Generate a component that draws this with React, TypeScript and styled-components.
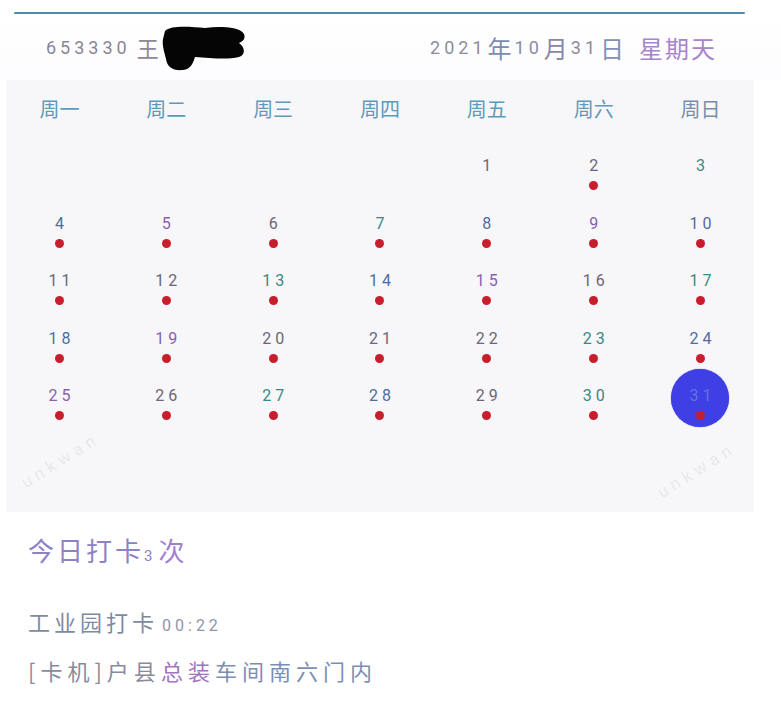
import React from "react";
import styled, { createGlobalStyle } from "styled-components";

const GlobalStyle = createGlobalStyle`
  html, body {
    margin: 0;
    padding: 0;
    background: #fff;
  }
  body {
    font-family: "Noto Sans", "Noto Sans CJK SC", sans-serif;
  }
`;

const CJK = `"Noto Sans CJK SC", "Noto Sans", sans-serif`;
const DIGITS = `Roboto, "Noto Sans", sans-serif`;

const Page = styled.div`
  width: 781px;
  height: 703px;
  overflow: hidden;
  background: #fff;
`;

const TopRule = styled.div`
  margin: 12px 0 0 14px;
  width: 731px;
  height: 2px;
  border-radius: 1px;
  background: #4f88aa;
`;

const Header = styled.div`
  display: flex;
  align-items: center;
  justify-content: space-between;
  height: 66px;
  padding: 0 64px 0 46px;
  background: linear-gradient(#fff, #fdfcfe);
`;

const Who = styled.div`
  display: flex;
  align-items: center;
`;

const Digits = styled.span<{ $size?: number; $color?: string }>`
  font-family: ${DIGITS};
  font-size: ${(p) => p.$size ?? 18}px;
  letter-spacing: 4px;
  color: ${(p) => p.$color ?? "#8a8597"};
`;

const Han = styled.span<{ $size?: number; $color?: string }>`
  font-family: ${CJK};
  font-size: ${(p) => p.$size ?? 22}px;
  color: ${(p) => p.$color ?? "#8c8898"};
`;

const DateHan = styled(Han)`
  margin: 0 3px 0 1px;
`;

const Blot = styled.svg`
  margin-left: 2px;
  margin-top: 2px;
`;

const DateLine = styled.div`
  display: flex;
  align-items: center;
`;

const Panel = styled.div`
  position: relative;
  margin-left: 6px;
  width: 748px;
  padding-bottom: 88px;
  background: #f7f6f8;
`;

const WeekRow = styled.div`
  display: grid;
  grid-template-columns: repeat(7, 1fr);
  height: 56px;
  align-items: center;
`;

const WeekLabel = styled.div<{ $color?: string }>`
  text-align: center;
  font-family: ${CJK};
  font-size: 20px;
  color: ${(p) => p.$color ?? "#5c9cb8"};
`;

const DayGrid = styled.div`
  display: grid;
  grid-template-columns: repeat(7, 1fr);
  grid-auto-rows: 57.5px;
`;

const Cell = styled.div`
  position: relative;
  display: flex;
  flex-direction: column;
  align-items: center;
  padding-top: 22px;
`;

const Num = styled.span<{ $color: string }>`
  position: relative;
  font-family: ${DIGITS};
  font-size: 16px;
  line-height: 16px;
  letter-spacing: 4px;
  margin-right: -4px;
  color: ${(p) => p.$color};
`;

const Dot = styled.span<{ $hidden?: boolean }>`
  position: relative;
  margin-top: 7px;
  width: 9px;
  height: 9px;
  border-radius: 50%;
  background: #c81d2c;
  visibility: ${(p) => (p.$hidden ? "hidden" : "visible")};
`;

const TodayRing = styled.span`
  position: absolute;
  top: 3px;
  left: 50%;
  width: 58px;
  height: 58px;
  margin-left: -30px;
  border-radius: 50%;
  background: #3e3fe4;
  box-shadow: 0 0 1px #3a3ad0;
`;

const Watermark = styled.span<{ $x: number; $y: number }>`
  position: absolute;
  left: ${(p) => p.$x}px;
  top: ${(p) => p.$y}px;
  transform: rotate(-32deg);
  font-family: ${DIGITS};
  font-size: 17px;
  letter-spacing: 5px;
  color: rgba(120, 120, 130, 0.13);
  pointer-events: none;
`;

const Summary = styled.div`
  padding: 22px 0 0 28px;
`;

const Title = styled.div`
  display: flex;
  align-items: baseline;
  height: 32px;
  line-height: 32px;
`;

const TitleHan = styled.span<{ $color: string }>`
  font-family: ${CJK};
  font-size: 26px;
  letter-spacing: 3px;
  color: ${(p) => p.$color};
`;

const TitleCount = styled.span`
  font-family: ${DIGITS};
  font-size: 15px;
  margin: 0 6px 0 0;
  color: #8f82c2;
`;

const Record = styled.div<{ $gap: number }>`
  margin-top: ${(p) => p.$gap}px;
  height: 32px;
  line-height: 32px;
  display: flex;
  align-items: baseline;
`;

const RecHan = styled.span<{ $color: string }>`
  font-family: ${CJK};
  font-size: 22px;
  letter-spacing: 4px;
  color: ${(p) => p.$color};
`;

const RecPlace = styled(RecHan)`
  letter-spacing: 5px;
`;

const RecTime = styled.span`
  font-family: ${DIGITS};
  font-size: 16px;
  letter-spacing: 4px;
  margin-left: 4px;
  color: #9095a8;
`;

const GRAY = "#6e6579";
const BLUE = "#4f6e9e";
const PURPLE = "#8a5fae";
const TEAL = "#3d8884";

const tone: Record<number, string> = {
  1: GRAY, 2: GRAY, 3: TEAL, 4: BLUE, 5: PURPLE, 6: GRAY, 7: TEAL,
  8: BLUE, 9: PURPLE, 10: BLUE, 11: GRAY, 12: GRAY, 13: TEAL, 14: BLUE,
  15: PURPLE, 16: GRAY, 17: TEAL, 18: BLUE, 19: PURPLE, 20: GRAY, 21: GRAY,
  22: GRAY, 23: TEAL, 24: BLUE, 25: PURPLE, 26: GRAY, 27: TEAL, 28: BLUE,
  29: GRAY, 30: TEAL, 31: "#5f74e0",
};

const weekdays = ["周一", "周二", "周三", "周四", "周五", "周六", "周日"];
const noPunch = [1, 3];
const today = 31;
const firstOffset = 4; // Oct 1 2021 is a Friday

export default function App() {
  const cells: (number | null)[] = [
    ...Array(firstOffset).fill(null),
    ...Array.from({ length: 31 }, (_, i) => i + 1),
  ];

  return (
    <Page>
      <GlobalStyle />
      <TopRule />
      <Header>
        <Who>
          <Digits>653330</Digits>
          <Han $size={22} style={{ marginLeft: 6 }}>王</Han>
          <Blot width="86" height="46" viewBox="0 0 86 46">
            <path
              d="M4 6 C10 0 30 2 44 3 C58 1 74 2 80 6 C86 10 84 16 78 18 C84 22 85 30 78 32 C66 35 50 33 34 32 C32 38 30 44 22 45 C12 46 6 42 5 34 C3 26 1 20 2 14 Z"
              fill="#050505"
            />
          </Blot>
        </Who>
        <DateLine>
          <Digits $color="#8a8c9e">2021</Digits>
          <DateHan $size={24} $color="#7c8cb0">年</DateHan>
          <Digits $color="#8a8c9e">10</Digits>
          <DateHan $size={24} $color="#8a86a8">月</DateHan>
          <Digits $color="#8a8c9e">31</Digits>
          <DateHan $size={24} $color="#8390b8">日</DateHan>
          <Han $size={24} $color="#a884cc" style={{ marginLeft: 12, letterSpacing: 2 }}>
            星期天
          </Han>
        </DateLine>
      </Header>

      <Panel>
        <WeekRow>
          {weekdays.map((w, i) => (
            <WeekLabel key={w} $color={i === 6 ? "#7a8eaa" : undefined}>
              {w}
            </WeekLabel>
          ))}
        </WeekRow>
        <DayGrid>
          {cells.map((d, i) =>
            d === null ? (
              <Cell key={`e${i}`} />
            ) : (
              <Cell key={d}>
                {d === today && <TodayRing />}
                <Num $color={tone[d]}>{d}</Num>
                <Dot $hidden={noPunch.includes(d)} />
              </Cell>
            )
          )}
        </DayGrid>
        <Watermark $x={10} $y={370}>unkwan</Watermark>
        <Watermark $x={646} $y={380}>unkwan</Watermark>
      </Panel>

      <Summary>
        <Title>
          <TitleHan $color="#8f82c2">今日打卡</TitleHan>
          <TitleCount>3</TitleCount>
          <TitleHan $color="#a27fd0">次</TitleHan>
        </Title>
        <Record $gap={39}>
          <RecHan $color="#7d8aa6">工业园打卡</RecHan>
          <RecTime>00:22</RecTime>
        </Record>
        <Record $gap={17}>
          <RecPlace $color="#8a8a9c">[卡机]户县</RecPlace>
          <RecPlace $color="#a274bf">总装</RecPlace>
          <RecPlace $color="#7c8fb2">车间南六门内</RecPlace>
        </Record>
      </Summary>
    </Page>
  );
}
